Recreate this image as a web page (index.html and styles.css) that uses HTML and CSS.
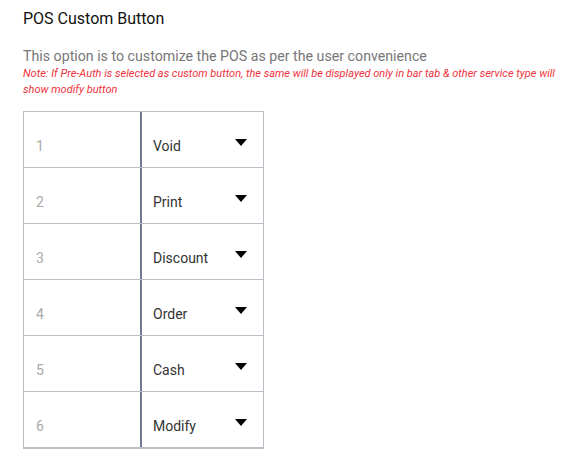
FILE: index.html
```html
<!DOCTYPE html>
<html>
<head>
<meta charset="utf-8">
<link rel="stylesheet" href="styles.css">
</head>
<body>
<div class="page">
  <h1 class="title">POS Custom Button</h1>
  <p class="desc">This option is to customize the POS as per the user convenience</p>
  <p class="note">Note: If Pre-Auth is selected as custom button, the same will be displayed only in bar tab &amp; other service type will show modify button</p>
  <div class="table">
    <div class="row"><div class="num">1</div><div class="sel"><span>Void</span><svg class="caret" viewBox="0 0 12 7"><path d="M0 0H12L6 7Z"/></svg></div></div>
    <div class="row"><div class="num">2</div><div class="sel"><span>Print</span><svg class="caret" viewBox="0 0 12 7"><path d="M0 0H12L6 7Z"/></svg></div></div>
    <div class="row"><div class="num">3</div><div class="sel"><span>Discount</span><svg class="caret" viewBox="0 0 12 7"><path d="M0 0H12L6 7Z"/></svg></div></div>
    <div class="row"><div class="num">4</div><div class="sel"><span>Order</span><svg class="caret" viewBox="0 0 12 7"><path d="M0 0H12L6 7Z"/></svg></div></div>
    <div class="row"><div class="num">5</div><div class="sel"><span>Cash</span><svg class="caret" viewBox="0 0 12 7"><path d="M0 0H12L6 7Z"/></svg></div></div>
    <div class="row"><div class="num">6</div><div class="sel"><span>Modify</span><svg class="caret" viewBox="0 0 12 7"><path d="M0 0H12L6 7Z"/></svg></div></div>
  </div>
</div>
</body>
</html>
```
FILE: styles.css
```css
html, body {
  margin: 0;
  padding: 0;
  background: #ffffff;
}
body {
  font-family: Roboto, "Liberation Sans", sans-serif;
}
.page {
  padding: 9px 0 0 23px;
}
.title {
  margin: 0;
  font-size: 16px;
  font-weight: 400;
  color: #111;
  line-height: 20px;
}
.desc {
  margin: 17px 0 0;
  font-size: 14.2px;
  color: #777;
  line-height: 20px;
}
.note {
  margin: 0;
  font-size: 11px;
  font-style: italic;
  color: #f0323c;
  line-height: 16px;
  width: 545px;
}
.table {
  margin-top: 13px;
  width: 239px;
  border: 1px solid #b9bec4;
  border-bottom-width: 2px;
}
.row {
  display: flex;
  height: 55px;
  border-top: 1px solid #b9bec4;
}
.row:first-child {
  border-top: none;
}
.num {
  width: 118px;
  border-right: 2px solid #6f7a8c;
  display: flex;
  align-items: center;
  padding: 13px 0 0 12px;
  box-sizing: border-box;
  font-size: 14px;
  color: #aaa;
}
.sel {
  flex: 1;
  display: flex;
  align-items: center;
  justify-content: space-between;
  padding: 13px 16px 0 11px;
  font-size: 14px;
  color: #333;
}
.caret {
  width: 12px;
  height: 7px;
  fill: #000;
  margin-top: -8px;
}
```
